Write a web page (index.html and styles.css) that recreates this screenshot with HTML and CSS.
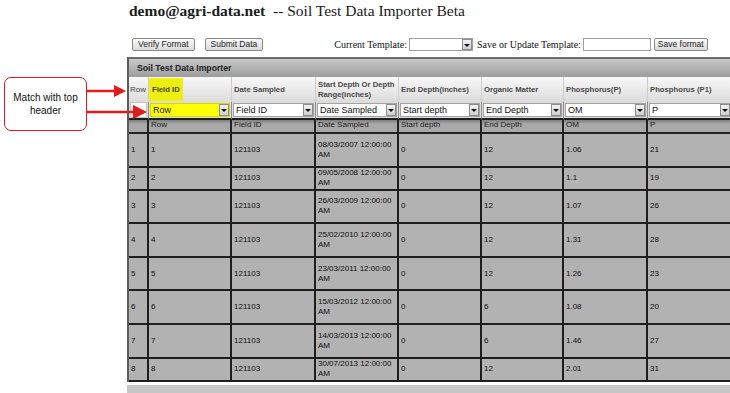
FILE: index.html
```html
<!DOCTYPE html>
<html lang="en">
<head>
  <meta charset="UTF-8" />
  <title>Soil Test Data Importer</title>
  <link rel="stylesheet" href="styles.css">
</head>
<body>

  <div class="callout">Match with top<br>header</div>
  <svg class="arrows" width="160" height="140" viewBox="0 0 160 140">
    <line x1="87" y1="91" x2="116" y2="91" stroke="#e41b1b" stroke-width="2.5" />
    <polygon points="114,85 126,91 114,97" fill="#e41b1b" />
    <line x1="87" y1="112" x2="134" y2="112" stroke="#e41b1b" stroke-width="2.5" />
    <polygon points="133,105 147,112 133,119" fill="#e41b1b" />
  </svg>

  <div class="page">
    <h1><b>demo@agri-data.net</b> &nbsp;-- Soil Test Data Importer Beta</h1>

    <div class="toolbar">
      <button class="btn">Verify Format</button>
      <button class="btn">Submit Data</button>
      <span class="label first">Current Template:</span>
      <span class="combo"><span class="combo-text"></span><span class="combo-btn"></span></span>
      <span class="label">Save or Update Template:</span>
      <span class="textbox"></span>
      <button class="btn">Save format</button>
    </div>

    <div class="grid">
      <div class="grid-title">Soil Test Data Importer</div>
      <table>
        <colgroup>
          <col class="c-row"><col class="c-field"><col class="c-date"><col class="c-start">
          <col class="c-end"><col class="c-om"><col class="c-p"><col class="c-p1">
        </colgroup>
        <tr class="head">
          <th class="plain">Row</th>
          <th class="hl"><span>Field ID</span></th>
          <th>Date Sampled</th>
          <th>Start Depth Or Depth Range(inches)</th>
          <th>End Depth(inches)</th>
          <th>Organic Matter</th>
          <th>Phosphorus(P)</th>
          <th>Phosphorus (P1)</th>
        </tr>
        <tr class="pick">
          <td><span class="blank"></span></td>
          <td><span class="sel yellow"><span class="sel-text">Row</span><span class="combo-btn"></span></span></td>
          <td><span class="sel"><span class="sel-text">Field ID</span><span class="combo-btn"></span></span></td>
          <td><span class="sel"><span class="sel-text">Date Sampled</span><span class="combo-btn"></span></span></td>
          <td><span class="sel"><span class="sel-text">Start depth</span><span class="combo-btn"></span></span></td>
          <td><span class="sel"><span class="sel-text">End Depth</span><span class="combo-btn"></span></span></td>
          <td><span class="sel"><span class="sel-text">OM</span><span class="combo-btn"></span></span></td>
          <td><span class="sel"><span class="sel-text">P</span><span class="combo-btn"></span></span></td>
        </tr>
        <tr class="labels">
          <td></td><td>Row</td><td>Field ID</td><td>Date Sampled</td>
          <td>Start depth</td><td>End Depth</td><td>OM</td><td>P</td>
        </tr>
        <tr class="tall">
          <td>1</td><td>1</td><td>121103</td><td>08/03/2007 12:00:00 AM</td><td>0</td><td>12</td><td>1.06</td><td>21</td>
        </tr>
        <tr>
          <td>2</td><td>2</td><td>121103</td><td>09/05/2008 12:00:00 AM</td><td>0</td><td>12</td><td>1.1</td><td>19</td>
        </tr>
        <tr class="tall">
          <td>3</td><td>3</td><td>121103</td><td>26/03/2009 12:00:00 AM</td><td>0</td><td>12</td><td>1.07</td><td>26</td>
        </tr>
        <tr class="tall">
          <td>4</td><td>4</td><td>121103</td><td>25/02/2010 12:00:00 AM</td><td>0</td><td>12</td><td>1.31</td><td>28</td>
        </tr>
        <tr class="tall">
          <td>5</td><td>5</td><td>121103</td><td>23/03/2011 12:00:00 AM</td><td>0</td><td>12</td><td>1.26</td><td>23</td>
        </tr>
        <tr class="tall">
          <td>6</td><td>6</td><td>121103</td><td>15/03/2012 12:00:00 AM</td><td>0</td><td>6</td><td>1.08</td><td>20</td>
        </tr>
        <tr class="tall">
          <td>7</td><td>7</td><td>121103</td><td>14/03/2013 12:00:00 AM</td><td>0</td><td>6</td><td>1.46</td><td>27</td>
        </tr>
        <tr>
          <td>8</td><td>8</td><td>121103</td><td>30/07/2013 12:00:00 AM</td><td>0</td><td>12</td><td>2.01</td><td>31</td>
        </tr>
      </table>
    </div>
    <div class="grid-footer"></div>
  </div>

</body>
</html>
```

FILE: styles.css
```css
* {
  box-sizing: border-box;
}

html, body {
  margin: 0;
  padding: 0;
  height: 100%;
  overflow: hidden;
  background: white;
  font-family: "Liberation Sans", Arial, sans-serif;
  color: #1a1a1a;
}

body {
  position: relative;
}

.page {
  margin-left: 127px;
  width: 620px;
}

h1 {
  margin: 1px 0 0 2px;
  font-family: "Liberation Serif", "Times New Roman", serif;
  font-size: 15.5px;
  font-weight: normal;
  line-height: 20px;
  white-space: nowrap;
}

/* toolbar */
.toolbar {
  display: flex;
  align-items: center;
  height: 15px;
  margin-top: 16px;
  white-space: nowrap;
}

.btn {
  height: 13px;
  padding: 0 5px;
  margin: 0 0 0 5px;
  font-family: "Liberation Sans", Arial, sans-serif;
  font-size: 8.5px;
  line-height: 11px;
  color: #222;
  border: 1px solid #8a8a8a;
  border-radius: 2px;
  background: linear-gradient(#fbfbfb, #dadada);
}

.btn + .btn {
  margin-left: 10px;
}

.toolbar .label {
  font-family: "Liberation Serif", "Times New Roman", serif;
  font-size: 10px;
  color: #111;
  margin-left: 4px;
}

.toolbar .label.first {
  margin-left: 71px;
}

.combo {
  display: flex;
  width: 64px;
  height: 13px;
  margin-left: 2px;
  border: 1px solid #a0a0a0;
  background: white;
}

.combo-text {
  flex: 1;
}

.combo-btn {
  position: relative;
  width: 10px;
  flex: none;
  background: linear-gradient(#f4f4f4, #cfcfcf);
  border: 1px solid #8c8c8c;
}

.combo-btn::after {
  content: "";
  position: absolute;
  left: 1px;
  top: 4px;
  border-left: 3px solid transparent;
  border-right: 3px solid transparent;
  border-top: 3px solid #111;
}

.textbox {
  width: 68px;
  height: 13px;
  margin-left: 2px;
  border: 1px solid #a0a0a0;
  background: white;
}

.toolbar .textbox + .btn {
  margin-left: 3px;
  padding: 0 3px;
}

/* grid */
.grid {
  margin-top: 5px;
  border-left: 2px solid #5c5c5c;
}

.grid-title {
  height: 20px;
  line-height: 18px;
  padding-left: 8px;
  font-size: 8.7px;
  font-weight: bold;
  color: #1c1c1c;
  border-top: 2px solid #6c6c6c;
  background: linear-gradient(#c8c8c8, #9d9d9d);
}

table {
  width: 604px;
  table-layout: fixed;
  border-collapse: separate;
  border-spacing: 0;
  font-size: 8px;
}

.c-row { width: 20px; }
.c-field { width: 83px; }
.c-date { width: 84px; }
.c-start { width: 83px; }
.c-end { width: 83px; }
.c-om { width: 82px; }
.c-p { width: 84px; }
.c-p1 { width: 85px; }

.head th {
  height: 25px;
  padding: 0 0 0 2px;
  text-align: left;
  vertical-align: middle;
  font-size: 7.7px;
  font-weight: bold;
  line-height: 10px;
  color: #484848;
  border-right: 1px solid #cbcbcb;
  background: linear-gradient(#f8f8f8, #dcdcdc);
}

.head th.plain {
  font-size: 8px;
  font-weight: normal;
  color: #444;
  padding: 0 1px;
}

.head th.hl {
  padding: 0;
}

.hl span {
  display: inline-block;
  height: 23px;
  line-height: 23px;
  padding: 0 3px;
  color: #45451c;
  background: #eeee10;
}

.pick td {
  height: 16px;
  padding: 1px;
  background: #dcdcdc;
  border-right: 1px solid #8f8f8f;
}

.blank {
  display: block;
  height: 16px;
  margin: -1px 0;
  background: #fafafa;
  border: 1px solid #c4c4c4;
}

.sel {
  display: flex;
  height: 14px;
  border: 1px solid #a4a4a4;
  background: white;
}

.sel.yellow {
  background: #ffff00;
  border-color: #d8d800;
}

.sel-text {
  flex: 1;
  padding-left: 2px;
  font-size: 9px;
  line-height: 12px;
  color: #111;
  white-space: nowrap;
  overflow: hidden;
}

.labels td {
  height: 14px;
  padding: 0 2px;
  line-height: 10px;
  vertical-align: top;
  color: #1a1a1a;
  background: linear-gradient(#7e7e7e, #a9a9a9 4px);
  border-right: 2px solid #222;
  border-bottom: 2px solid #222;
}

tr td {
  height: 23px;
  padding: 0 2px;
  line-height: 10px;
  vertical-align: middle;
  color: #0c0c0c;
  background: #b2b2b2;
  border-right: 2px solid #1e1e1e;
  border-bottom: 2px solid #1e1e1e;
}

tr.tall td {
  height: 33.6px;
}

.grid-footer {
  height: 20px;
  margin-top: 3px;
  background: #c6c6c6;
}

/* annotation */
.callout {
  position: absolute;
  left: 4px;
  top: 77px;
  width: 83px;
  height: 54px;
  padding-top: 13px;
  text-align: center;
  font-size: 10px;
  line-height: 13px;
  color: #111;
  background: white;
  border: 1.5px solid #e41b1b;
  border-radius: 7px;
  z-index: 2;
}

.arrows {
  position: absolute;
  left: 0;
  top: 0;
  z-index: 3;
}
```
